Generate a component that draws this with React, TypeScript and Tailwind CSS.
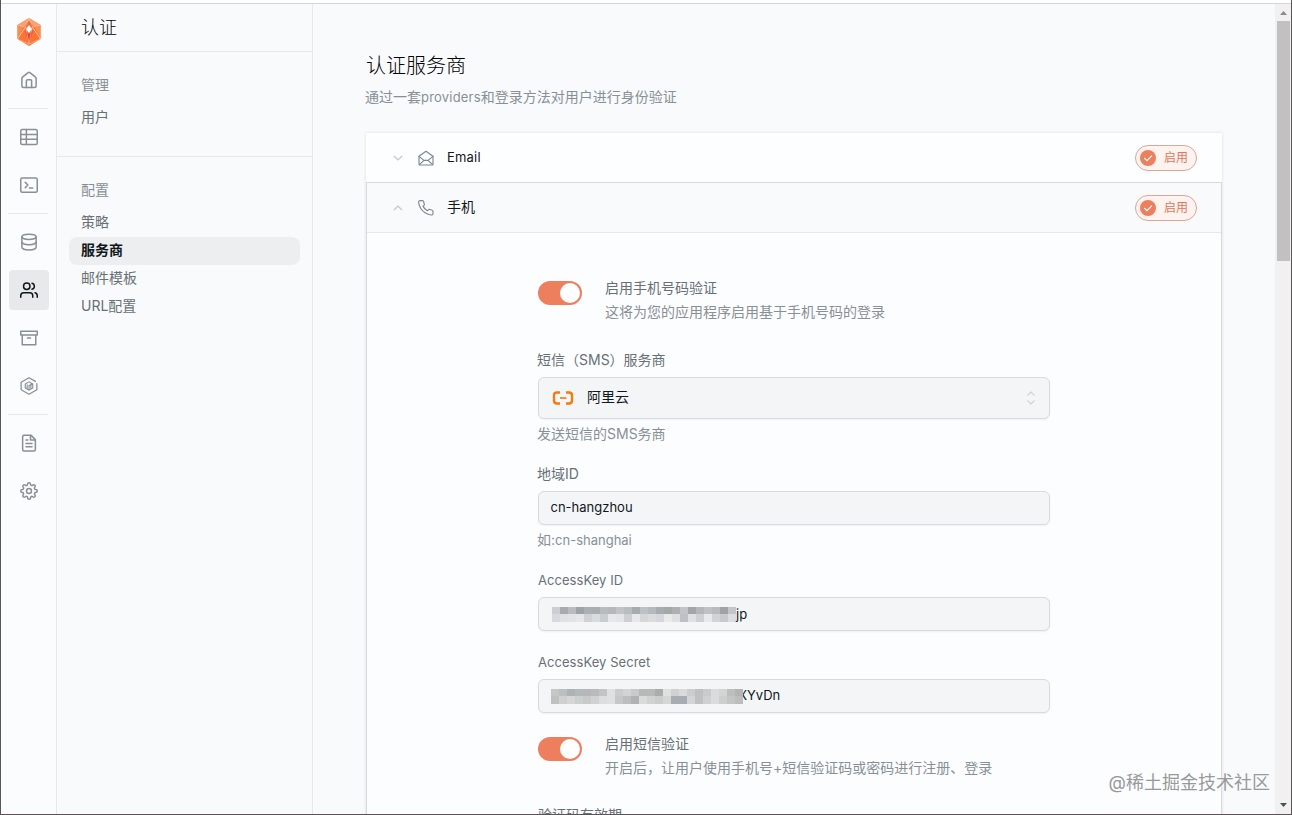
import type { ReactNode } from "react";

interface IIconProps {
  children: ReactNode;
  size?: number;
  stroke?: number;
}

const Icon = ({ children, size = 18, stroke = 2 }: IIconProps) => (
  <svg
    width={size}
    height={size}
    viewBox="0 0 24 24"
    fill="none"
    stroke="currentColor"
    strokeWidth={stroke}
    strokeLinecap="round"
    strokeLinejoin="round"
    className="shrink-0"
  >
    {children}
  </svg>
);

const Logo = () => (
  <svg width="24" height="28" viewBox="0 0 25 28" preserveAspectRatio="none">
    <path d="M12.500 0 24.500 7v14l-12 7-12-7V7z" fill="#f9793f" />
    <path d="M12.500 0 24.500 7 18 9 12.500 3 7 9 .5 7z" fill="#f8a274" />
    <path d="M.5 7 7 9 .5 21zM24.500 7 18 9l6.500 12z" fill="#f98d56" />
    <path d="M7 9 12.500 26 .5 21zM18 9 12.500 26l12-5z" fill="#fb7433" />
    <path d="M12.500 3 18 9l-5.500 17L7 9z" fill="#f26a3c" />
    <path d="M8.500 13 12.500 16l4-3-4 12.500z" fill="#ea4424" />
    <path
      d="M.5 7 9 9 .5 21M24.500 7 16 9l8.500 12M12.500 0 9 8l3.500 18L16 8zM9 9 .5 21l12 5 12-5L16 9"
      fill="none"
      stroke="#fdc9a6"
      strokeWidth=".6"
    />
    <path d="m12.500 7 3 4-3 4-3-4z" fill="#fff" />
  </svg>
);

const navGroups: { id: string; active?: boolean; icon: ReactNode }[][] = [
  [
    {
      id: "home",
      icon: (
        <>
          <path d="M2.500 9.800a2 2 0 0 1 .8-1.600l7.500-6a2 2 0 0 1 2.400 0l7.500 6a2 2 0 0 1 .8 1.600V20a2 2 0 0 1-2 2h-15a2 2 0 0 1-2-2z" />
          <path d="M8.500 22v-9a1.500 1.500 0 0 1 1.500-1.500h4a1.500 1.500 0 0 1 1.500 1.500v9" />
        </>
      ),
    },
  ],
  [
    {
      id: "table",
      icon: (
        <>
          <rect x="1" y="2" width="22" height="20" rx="2" />
          <path d="M1 8.500h22M1 15h22M8.500 2v20" />
        </>
      ),
    },
    {
      id: "sql",
      icon: (
        <>
          <rect x="1" y="2.500" width="22" height="19" rx="2" />
          <path d="m7 8.500 3.500 3.500L7 15.500M12.500 16H17" />
        </>
      ),
    },
  ],
  [
    {
      id: "database",
      icon: (
        <>
          <ellipse cx="12" cy="5" rx="9.500" ry="3.500" />
          <path d="M21.500 12c0 1.900-4.200 3.500-9.500 3.500S2.500 13.900 2.500 12" />
          <path d="M2.500 5v14c0 1.900 4.200 3.500 9.500 3.500s9.500-1.600 9.500-3.500V5" />
        </>
      ),
    },
    {
      id: "auth",
      active: true,
      icon: (
        <>
          <path d="M17 21.500v-2a4 4 0 0 0-4-4H5a4 4 0 0 0-4 4v2" />
          <circle cx="9" cy="7" r="4.300" />
          <path d="M23 21.500v-2a4 4 0 0 0-3-3.870M16 2.930a4.200 4.200 0 0 1 0 8.140" />
        </>
      ),
    },
    {
      id: "storage",
      icon: <path d="M21 8v13H3V8M1 3h22v5H1zM10 12h4" />,
    },
    {
      id: "functions",
      icon: (
        <>
          <path d="M20.500 5.800 12 1 1.500 7v10L12 23l10.500-6V9" strokeWidth="1.700" />
          <path
            d="m12 6.500 5 2.700v5.600l-5 2.700-5-2.700V9.200zM9.500 10.500v5M12 11.500v6M14.500 9.500v6M12 11.500l5-2.300"
            strokeWidth="1.500"
          />
        </>
      ),
    },
  ],
  [
    {
      id: "docs",
      icon: (
        <>
          <path d="M14.500 1.500H5.500a2 2 0 0 0-2 2v17a2 2 0 0 0 2 2h13a2 2 0 0 0 2-2v-13z" />
          <path d="M14 2v6h6M16 12.500H8M16 17H8M10.500 8H8" />
        </>
      ),
    },
    {
      id: "settings",
      icon: (
        <>
          <circle cx="12" cy="12" r="3.300" />
          <path d="M19.400 15a1.650 1.650 0 0 0 .33 1.820l.06.06a2 2 0 1 1-2.830 2.830l-.06-.06a1.650 1.650 0 0 0-2.800 1.170V21a2 2 0 0 1-4 0v-.09a1.650 1.650 0 0 0-2.920-1.260l-.06.06a2 2 0 1 1-2.830-2.830l.06-.06a1.650 1.650 0 0 0-1.170-2.800H3a2 2 0 0 1 0-4h.09a1.650 1.650 0 0 0 1.260-2.920l-.06-.06a2 2 0 1 1 2.830-2.830l.06.06a1.650 1.650 0 0 0 2.820-1.180V3a2 2 0 0 1 4 0v.09a1.650 1.650 0 0 0 2.820 1.170l.06-.06a2 2 0 1 1 2.830 2.830l-.06.06a1.650 1.650 0 0 0 1.180 2.820H21a2 2 0 0 1 0 4h-.09a1.650 1.650 0 0 0-1.510 1z" />
        </>
      ),
    },
  ],
];

const IconNav = () => (
  <nav className="flex w-14 shrink-0 flex-col gap-2 border-r border-[#e6e8eb] bg-[#fbfcfd] pt-2">
    <div className="ml-2 flex size-10 items-center justify-center">
      <Logo />
    </div>
    {navGroups.map((group, i) => (
      <div key={group[0].id} className="flex flex-col gap-2">
        {i > 0 && <div className="ml-[7px] h-px w-10 bg-[#e6e8eb]" />}
        {group.map((item) => (
          <button
            key={item.id}
            className={
              item.active
                ? "ml-2 flex size-10 items-center justify-center rounded bg-[#e7e9ea] text-[#11181c]"
                : "ml-2 flex size-10 items-center justify-center rounded text-[#889096]"
            }
          >
            <Icon>{item.icon}</Icon>
          </button>
        ))}
      </div>
    ))}
  </nav>
);

interface IMenuSectionProps {
  title: string;
  items: string[];
  active?: string;
}

const MenuSection = ({ title, items, active }: IMenuSectionProps) => (
  <div className="px-3 pt-[23px] pb-6">
    <p className="mb-[9px] px-3 leading-5 text-[#889096]">{title}</p>
    {items.map((item) => (
      <p
        key={item}
        className={
          item === active
            ? "h-7 rounded-lg bg-[#eceeef] px-3 leading-[25px] font-bold text-[#11181c]"
            : "h-7 px-3 leading-[25px] text-[#687076]"
        }
      >
        {item}
      </p>
    ))}
  </div>
);

const Sidebar = () => (
  <aside className="w-64 shrink-0 border-r border-[#e6e8eb]">
    <h1 className="h-12 border-b border-[#e6e8eb] px-6 text-lg leading-[47px] font-light text-black">认证</h1>
    <div className="h-[105px] border-b border-[#e6e8eb]">
      <MenuSection title="管理" items={["用户"]} />
    </div>
    <MenuSection title="配置" items={["策略", "服务商", "邮件模板", "URL配置"]} active="服务商" />
  </aside>
);

const EnabledBadge = () => (
  <span className="ml-auto flex h-[26px] w-[62px] items-center rounded-full border border-[#dfa595] bg-[#fef3ef] pl-1 text-xs text-[#e2755a]">
    <svg width="16" height="16" viewBox="0 0 16 16">
      <circle cx="8" cy="8" r="8" fill="#ec7f5d" />
      <path d="m4.300 8 2.700 2.700 4.900-5" fill="none" stroke="#fff" strokeWidth="1.200" />
    </svg>
    <span className="ml-2">启用</span>
  </span>
);

const Toggle = () => (
  <span className="mt-[5px] flex h-6 w-11 shrink-0 items-center justify-end rounded-full bg-[#ed7f5e] pr-0.5">
    <span className="size-5 rounded-full bg-white" />
  </span>
);

interface IToggleRowProps {
  label: string;
  description: string;
}

const ToggleRow = ({ label, description }: IToggleRowProps) => (
  <div className="flex gap-[23px]">
    <Toggle />
    <div className="leading-6">
      <p className="text-[#687076]">{label}</p>
      <p className="text-[#889096]">{description}</p>
    </div>
  </div>
);

interface IFieldProps {
  label: string;
  help?: ReactNode;
  latin?: boolean;
  children: ReactNode;
}

const Field = ({ label, help, latin, children }: IFieldProps) => (
  <div className="leading-6">
    <p
      className={
        latin ? "mb-[5px] text-[13px] leading-6 tracking-[0.05px] text-[#687076]" : "mb-[5px] -ml-px text-[#687076]"
      }
    >
      {label}
    </p>
    {children}
    {help && <p className="mt-[3px] -ml-px text-[#889096]">{help}</p>}
  </div>
);

const Input = ({ children }: { children: ReactNode }) => (
  <div className="flex h-[34px] items-center rounded-md border border-[#d7dbdf] bg-[#f4f5f6] px-3 text-[13px] text-[#11181c] shadow-xs">
    {children}
  </div>
);

const keyMask = [
  ["#cdcdd2", "#aaa9ad", "#b9bbc1", "#9fa3a8", "#a9b0b7", "#a9aeb2", "#b9bbbc", "#b5b8b8", "#c2c3c5", "#bbbcbe", "#a6acac", "#bec1c4", "#b6b9bb", "#a9adaf", "#a3a9a9", "#aeb1b2", "#c3c4c7", "#a4a4a9", "#b4b6b9", "#c0c1c5", "#b8babd", "#a1a2a6", "#c4c5c6"],
  ["#d8d9df", "#e0e1e5", "#e2e3e6", "#e6e7e9", "#cfd1d4", "#d9dcdd", "#cacdd0", "#e7e8ea", "#e4e5e8", "#cdcfd2", "#e6e8e9", "#d4d6d8", "#dadcde", "#d5d7da", "#e9eaec", "#dfe0e3", "#bfc0c5", "#dfe0e3", "#cfd0d4", "#e8e9eb", "#d1d3d6", "#c8cacd", "#dcdde0"],
];

const secretMask = [
  ["#c5c7c7", "#bbbfc0", "#adb3b5", "#b3b8ba", "#b5b7b8", "#b8babb", "#c2c4c5", "#dfe0e1", "#cacccd", "#d2d4d5", "#c9caca", "#b7b8b8", "#b8b9b9", "#acacac", "#dfe0e0", "#cfd1d2", "#d9dbdb", "#cbcdce", "#bec1c2", "#c9cccd", "#d9dbdc", "#d2d5d5", "#bcbfbe", "#b2b5b3"],
  ["#bfc1c1", "#cecfcf", "#d5d7d7", "#cdcfcf", "#c8caca", "#d0d2d2", "#dbddde", "#dfe0e1", "#c6c7c8", "#bcbdbe", "#b0b1b2", "#d9dbdb", "#d0d2d2", "#cbcdcd", "#d5d7d7", "#a9acb3", "#a8abb2", "#d2d4d5", "#bfc1c2", "#ced0d1", "#d9dbdc", "#cdcfcf", "#c2c5c4", "#bbbebc"],
];

const Mask = ({ rows }: { rows: string[][] }) => (
  <span className="flex shrink-0 flex-col">
    {rows.map((row, i) => (
      <span key={i} className="flex">
        {row.map((color, j) => (
          <span key={j} className="h-[7.500px] w-2" style={{ backgroundColor: color }} />
        ))}
      </span>
    ))}
  </span>
);

const EmailIcon = () => (
  <Icon size={16} stroke={1.700}>
    <path d="M1.500 9.500 12 2l10.500 7.500V21a1.500 1.500 0 0 1-1.500 1.500H3A1.500 1.500 0 0 1 1.500 21z" />
    <path d="m1.500 9.500 7.500 6h6l7.500-6M2 22l7-6.500M22 22l-7-6.500" />
  </Icon>
);

const PhoneIcon = () => (
  <Icon size={16} stroke={1.700}>
    <path d="M22.500 17v3.300a2.200 2.200 0 0 1-2.400 2.200 21.500 21.500 0 0 1-9.400-3.300 21.200 21.200 0 0 1-6.500-6.500A21.500 21.500 0 0 1 .9 3.300 2.200 2.200 0 0 1 3.100.9h3.300a2.200 2.200 0 0 1 2.200 1.900c.1 1 .4 2.100.8 3.100a2.200 2.200 0 0 1-.5 2.300L7.500 9.600a17.500 17.500 0 0 0 6.500 6.500l1.400-1.400a2.200 2.200 0 0 1 2.300-.5c1 .4 2 .6 3.100.8a2.200 2.200 0 0 1 1.700 2z" />
  </Icon>
);

const Chevron = ({ up }: { up?: boolean }) => (
  <svg width="10" height="6" viewBox="0 0 10 6" fill="none" stroke="#c1c8cd" strokeWidth="1.200" className="mr-[15px]">
    <path d={up ? "m1 5 4-4 4 4" : "m1 1 4 4 4-4"} />
  </svg>
);

const AliyunIcon = () => (
  <svg width="22" height="14" viewBox="0 0 22 14" fill="none" stroke="#f47a12">
    <path d="M8 1.500H5Q2 1.500 2 4.500v5Q2 12.500 5 12.500H8M14 1.500h3q3 0 3 3v5q0 3-3 3h-3" strokeWidth="2.400" />
    <path d="M8 7h6.500" strokeWidth="1.600" />
  </svg>
);

const ProviderForm = () => (
  <div className="mx-auto w-[512px] pt-[43px]">
    <ToggleRow label="启用手机号码验证" description="这将为您的应用程序启用基于手机号码的登录" />
    <div className="mt-6">
      <Field label="短信（SMS）服务商" help="发送短信的SMS务商">
        <div className="flex h-[42px] items-center rounded-md border border-[#d7dbdf] bg-[#f4f5f6] px-[13px] text-[#11181c] shadow-xs">
          <AliyunIcon />
          <span className="ml-[13px] pb-0.5">阿里云</span>
          <svg width="10" height="14" viewBox="0 0 10 14" fill="none" stroke="#d0d4d8" strokeWidth="1.200" className="ml-auto">
            <path d="m1.500 4.500 3.500-3.500 3.500 3.500M1.500 9.500 5 13l3.500-3.500" />
          </svg>
        </div>
      </Field>
    </div>
    <div className="mt-4">
      <Field
        label="地域ID"
        help={
          <>
            如:<span className="text-[13px]">cn-shanghai</span>
          </>
        }
      >
        <Input>
          <span className="-ml-[0.500px] pb-0.5">cn-hangzhou</span>
        </Input>
      </Field>
    </div>
    <div className="mt-4">
      <Field label="AccessKey ID" latin>
        <Input>
          <span className="ml-px">
            <Mask rows={keyMask} />
          </span>
          <span className="pb-px">jp</span>
        </Input>
      </Field>
    </div>
    <div className="mt-[19px]">
      <Field label="AccessKey Secret" latin>
        <Input>
          <Mask rows={secretMask} />
          {/* the mask covers all but the last strokes of the X */}
          <span className="flex w-1 justify-end overflow-hidden pb-0.5">X</span>
          <span className="pb-0.5">YvDn</span>
        </Input>
      </Field>
    </div>
    <div className="mt-[19px]">
      <ToggleRow label="启用短信验证" description="开启后，让用户使用手机号+短信验证码或密码进行注册、登录" />
    </div>
    <p className="mt-[23px] leading-6 text-[#687076]">验证码有效期</p>
  </div>
);

const Providers = () => (
  <main className="min-w-0 flex-1 overflow-hidden">
    <div className="mx-auto w-[856px] pt-[46px]">
      <h2 className="text-xl leading-8 font-light text-black">认证服务商</h2>
      <p className="mt-[3px] -ml-px leading-6 text-[#889096]">
        通过一套<span className="text-[13px] tracking-[0.2px]">providers</span>和登录方法对用户进行身份验证
      </p>
      <div className="mt-6 shadow-[0_0_3px_rgba(0,0,0,0.12)]">
        <div className="flex h-[49px] items-center bg-[#fdfeff] pr-[25px] pl-[27px] text-[#11181c]">
          <Chevron />
          <span className="text-[#7e868c]">
            <EmailIcon />
          </span>
          <span className="ml-[13px] pb-px text-[13px] tracking-[0.2px]">Email</span>
          <EnabledBadge />
        </div>
        <div className="border border-[#d7dbdf] bg-[#fcfdfe]">
          <div className="flex h-[50px] items-center border-b border-[#e6e8eb] bg-[#f9fafb] pr-6 pl-[26px] text-[#11181c]">
            <Chevron up />
            <span className="text-[#7e868c]">
              <PhoneIcon />
            </span>
            <span className="ml-[13px] pb-0.5">手机</span>
            <EnabledBadge />
          </div>
          <ProviderForm />
        </div>
      </div>
    </div>
  </main>
);

const Scrollbar = () => (
  <div className="flex w-4 shrink-0 flex-col items-center bg-[#f1f1f1]">
    <svg width="15" height="17" viewBox="0 0 15 17">
      <path d="M4 11h7L7.500 7z" fill="#8c8c8c" />
    </svg>
    <div className="h-[240px] w-[13px] bg-[#c1c1c1]" />
    <svg width="15" height="17" viewBox="0 0 15 17" className="mt-auto">
      <path d="M4 6h7l-3.500 4z" fill="#505050" />
    </svg>
  </div>
);

export default function App() {
  return (
    <div className="relative flex h-[815px] w-[1292px] flex-col overflow-hidden border-r border-b border-l border-[#5b5457] bg-[#f8fafb] font-['Inter','Noto_Sans_CJK_SC',sans-serif] text-sm">
      <div className="h-1 shrink-0 border-b border-[#d4d6d8] bg-white" />
      <div className="flex min-h-0 flex-1">
        <IconNav />
        <Sidebar />
        <Providers />
        <Scrollbar />
      </div>
      <p className="absolute right-[21px] bottom-[17px] text-lg leading-7 text-[#97999b] [text-shadow:0_0_2px_white]">
        @稀土掘金技术社区
      </p>
    </div>
  );
}
